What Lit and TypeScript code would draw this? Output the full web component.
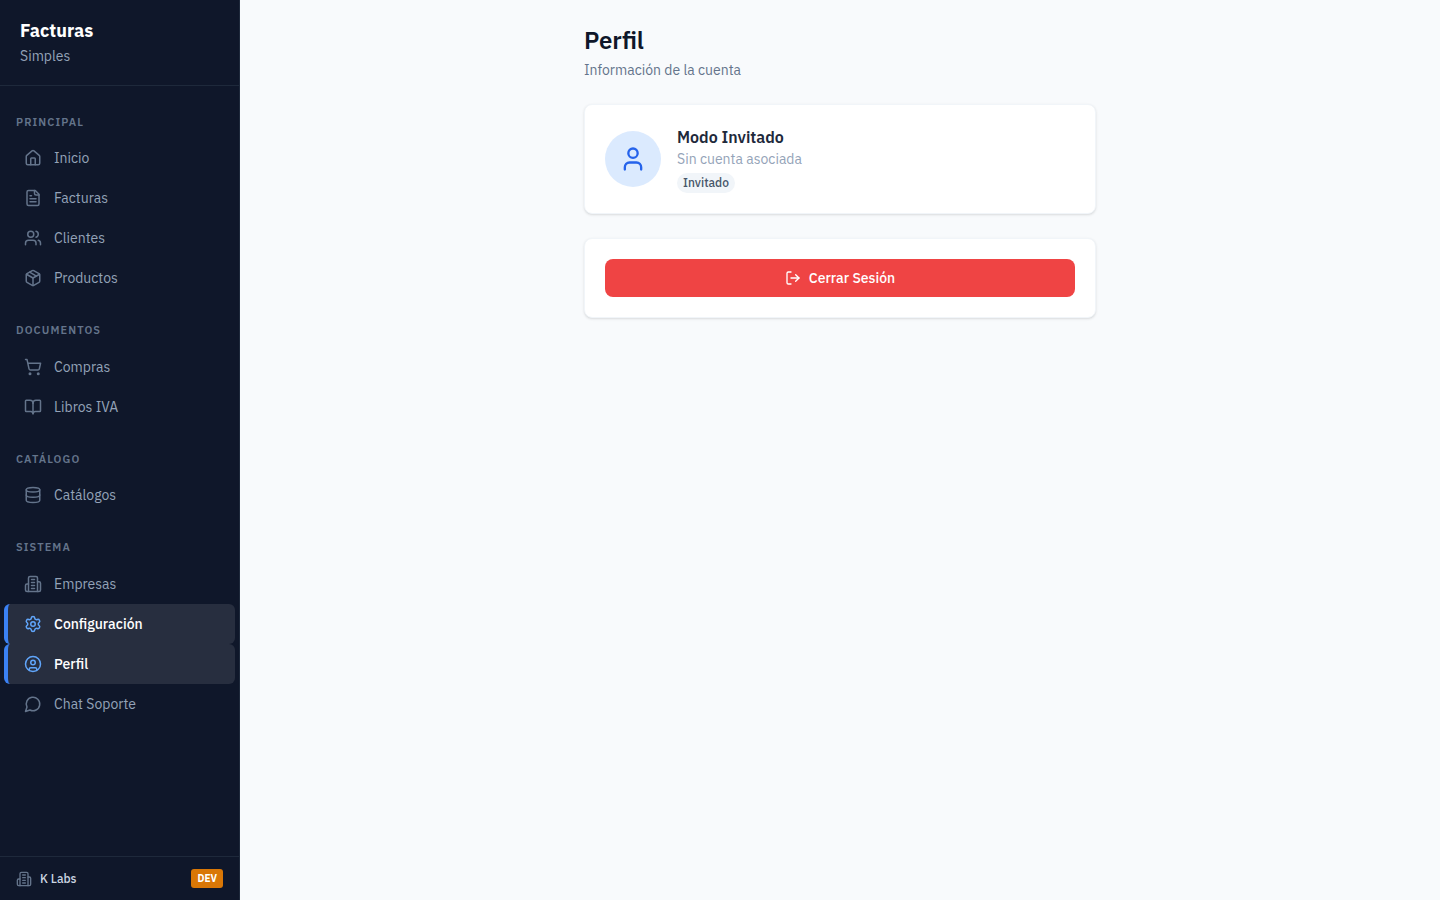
import { LitElement, html, css, svg } from "lit";
import { customElement, property } from "lit/decorators.js";

const icons = {
  home: svg`<path d="M15 21v-8a1 1 0 0 0-1-1h-4a1 1 0 0 0-1 1v8"/><path d="M3 10a2 2 0 0 1 .709-1.528l7-5.999a2 2 0 0 1 2.582 0l7 5.999A2 2 0 0 1 21 10v9a2 2 0 0 1-2 2H5a2 2 0 0 1-2-2z"/>`,
  file: svg`<path d="M15 2H6a2 2 0 0 0-2 2v16a2 2 0 0 0 2 2h12a2 2 0 0 0 2-2V7Z"/><path d="M14 2v4a2 2 0 0 0 2 2h4"/><path d="M10 9H8"/><path d="M16 13H8"/><path d="M16 17H8"/>`,
  users: svg`<path d="M16 21v-2a4 4 0 0 0-4-4H6a4 4 0 0 0-4 4v2"/><circle cx="9" cy="7" r="4"/><path d="M22 21v-2a4 4 0 0 0-3-3.87"/><path d="M16 3.13a4 4 0 0 1 0 7.75"/>`,
  box: svg`<path d="m7.5 4.27 9 5.15"/><path d="M21 8a2 2 0 0 0-1-1.73l-7-4a2 2 0 0 0-2 0l-7 4A2 2 0 0 0 3 8v8a2 2 0 0 0 1 1.73l7 4a2 2 0 0 0 2 0l7-4A2 2 0 0 0 21 16Z"/><path d="m3.3 7 8.7 5 8.7-5"/><path d="M12 22V12"/>`,
  cart: svg`<circle cx="8" cy="21" r="1"/><circle cx="19" cy="21" r="1"/><path d="M2.05 2.05h2l2.66 12.42a2 2 0 0 0 2 1.58h9.78a2 2 0 0 0 1.95-1.57l1.65-7.43H5.12"/>`,
  book: svg`<path d="M12 7v14"/><path d="M3 18a1 1 0 0 1-1-1V4a1 1 0 0 1 1-1h5a4 4 0 0 1 4 4 4 4 0 0 1 4-4h5a1 1 0 0 1 1 1v13a1 1 0 0 1-1 1h-6a3 3 0 0 0-3 3 3 3 0 0 0-3-3z"/>`,
  database: svg`<ellipse cx="12" cy="5" rx="9" ry="3"/><path d="M3 5v14a9 3 0 0 0 18 0V5"/><path d="M3 12a9 3 0 0 0 18 0"/>`,
  building: svg`<path d="M6 22V4a2 2 0 0 1 2-2h8a2 2 0 0 1 2 2v18Z"/><path d="M6 12H4a2 2 0 0 0-2 2v6a2 2 0 0 0 2 2h2"/><path d="M18 9h2a2 2 0 0 1 2 2v9a2 2 0 0 1-2 2h-2"/><path d="M10 6h4"/><path d="M10 10h4"/><path d="M10 14h4"/><path d="M10 18h4"/>`,
  settings: svg`<path d="M9.671 4.136a2.34 2.34 0 0 1 4.659 0 2.34 2.34 0 0 0 3.319 1.915 2.34 2.34 0 0 1 2.33 4.033 2.34 2.34 0 0 0 0 3.831 2.34 2.34 0 0 1-2.33 4.033 2.34 2.34 0 0 0-3.319 1.915 2.34 2.34 0 0 1-4.659 0 2.34 2.34 0 0 0-3.32-1.915 2.34 2.34 0 0 1-2.33-4.033 2.34 2.34 0 0 0 0-3.831A2.34 2.34 0 0 1 6.35 6.051a2.34 2.34 0 0 0 3.319-1.915"/><circle cx="12" cy="12" r="3"/>`,
  profile: svg`<circle cx="12" cy="12" r="10"/><circle cx="12" cy="10" r="3"/><path d="M7 20.662V19a2 2 0 0 1 2-2h6a2 2 0 0 1 2 2v1.662"/>`,
  chat: svg`<path d="M7.9 20A9 9 0 1 0 4 16.1L2 22Z"/>`,
  user: svg`<path d="M19 21v-2a4 4 0 0 0-4-4H9a4 4 0 0 0-4 4v2"/><circle cx="12" cy="7" r="4"/>`,
  logout: svg`<path d="M9 21H5a2 2 0 0 1-2-2V5a2 2 0 0 1 2-2h4"/><path d="m16 17 5-5-5-5"/><path d="M21 12H9"/>`,
};
type IconName = keyof typeof icons;

const sections: { title: string; items: { icon: IconName; label: string; active?: boolean }[] }[] = [
  {
    title: "Principal",
    items: [
      { icon: "home", label: "Inicio" },
      { icon: "file", label: "Facturas" },
      { icon: "users", label: "Clientes" },
      { icon: "box", label: "Productos" },
    ],
  },
  {
    title: "Documentos",
    items: [
      { icon: "cart", label: "Compras" },
      { icon: "book", label: "Libros IVA" },
    ],
  },
  { title: "Catálogo", items: [{ icon: "database", label: "Catálogos" }] },
  {
    title: "Sistema",
    items: [
      { icon: "building", label: "Empresas" },
      { icon: "settings", label: "Configuración", active: true },
      { icon: "profile", label: "Perfil", active: true },
      { icon: "chat", label: "Chat Soporte" },
    ],
  },
];

@customElement("app-icon")
export class AppIcon extends LitElement {
  @property() name: IconName = "home";

  static styles = css`
    :host {
      display: block;
      flex: none;
      width: 18px;
      height: 18px;
    }
    .glyph {
      display: block;
      width: 100%;
      height: 100%;
      fill: none;
      stroke: currentColor;
      stroke-width: 2;
      stroke-linecap: round;
      stroke-linejoin: round;
    }
  `;

  render() {
    return html`<svg class="glyph" viewBox="0 0 24 24" aria-hidden="true">${icons[this.name]}</svg>`;
  }
}

@customElement("app-sidebar")
export class AppSidebar extends LitElement {
  static styles = css`
    :host {
      display: flex;
      flex-direction: column;
      box-sizing: border-box;
      background: #0f172a;
      border-right: 1px solid #1e293b;
      color: #94a3b8;
    }
    .brand {
      padding: 20px;
      border-bottom: 1px solid #1e293b;
    }
    .brand-name {
      margin: 0;
      font-size: 18px;
      line-height: 1.25;
      font-weight: 700;
      color: #ffffff;
    }
    .brand-sub {
      margin: 4px 0 0;
      font-size: 14px;
      line-height: 1.3;
    }
    .nav {
      flex: 1;
      display: flex;
      flex-direction: column;
      gap: 20px;
      padding: 24px 0;
      overflow: auto;
    }
    .title {
      margin: 0;
      padding: 4px 16px 8px;
      font-size: 11px;
      line-height: 1.5;
      font-weight: 600;
      letter-spacing: 0.1em;
      text-transform: uppercase;
      color: #64748b;
    }
    .list {
      margin: 0;
      padding: 0 4px;
      list-style: none;
    }
    .link {
      display: flex;
      align-items: center;
      gap: 12px;
      height: 40px;
      box-sizing: border-box;
      padding: 0 16px;
      border-left: 4px solid transparent;
      border-radius: 6px;
      font-size: 14px;
      color: #94a3b8;
      text-decoration: none;
    }
    .link app-icon {
      color: #64748b;
    }
    .link.active {
      background: #272e3f;
      border-left-color: #3b82f6;
      color: #ffffff;
      font-weight: 500;
    }
    .link.active app-icon {
      color: #60a5fa;
    }
    .foot {
      display: flex;
      align-items: center;
      gap: 8px;
      padding: 12px 16px;
      border-top: 1px solid #1e293b;
    }
    .foot app-icon {
      width: 16px;
      height: 16px;
      color: #64748b;
    }
    .company {
      flex: 1;
      font-size: 12px;
      line-height: 17px;
      font-weight: 500;
      color: #cbd5e1;
    }
    .env {
      padding: 2px 6px;
      border-radius: 3px;
      background: #d97706;
      color: #ffffff;
      font-size: 10px;
      line-height: 15px;
      font-weight: 700;
    }
  `;

  render() {
    return html`
      <header class="brand">
        <p class="brand-name">Facturas</p>
        <p class="brand-sub">Simples</p>
      </header>
      <nav class="nav">
        ${sections.map(
          (s) => html`<section>
            <h2 class="title">${s.title}</h2>
            <ul class="list">
              ${s.items.map(
                (i) => html`<li>
                  <a class="link ${i.active ? "active" : ""}" href="#"
                    ><app-icon name=${i.icon}></app-icon><span>${i.label}</span></a
                  >
                </li>`
              )}
            </ul>
          </section>`
        )}
      </nav>
      <footer class="foot">
        <app-icon name="building"></app-icon>
        <span class="company">K Labs</span>
        <span class="env">DEV</span>
      </footer>
    `;
  }
}

@customElement("app-root")
export class AppRoot extends LitElement {
  static styles = css`
    :host {
      display: grid;
      grid-template-columns: 240px 1fr;
      min-height: 100vh;
      background: #f8fafc;
      color: #0f172a;
      font-family: "IBM Plex Sans", Roboto, "Noto Sans", sans-serif;
      font-size: 14px;
    }
    .main {
      padding: 24px;
    }
    .page {
      max-width: 512px;
      margin: 0 auto;
      display: flex;
      flex-direction: column;
      gap: 24px;
    }
    .heading {
      margin: 0;
      font-size: 24px;
      line-height: 32px;
      font-weight: 600;
    }
    .lead {
      margin: 4px 0 0;
      line-height: 20px;
      color: #64748b;
    }
    .card {
      padding: 20px;
      border: 1px solid #f1f5f9;
      border-radius: 8px;
      background: #ffffff;
      box-shadow: 0 1px 3px rgba(0, 0, 0, 0.1), 0 1px 2px -1px rgba(0, 0, 0, 0.1);
    }
    .account {
      display: flex;
      align-items: center;
      gap: 16px;
    }
    .avatar {
      display: grid;
      place-items: center;
      width: 56px;
      height: 56px;
      border-radius: 50%;
      background: #dbeafe;
      color: #2563eb;
    }
    .avatar app-icon {
      width: 28px;
      height: 28px;
    }
    .name {
      margin: 0;
      font-size: 16px;
      line-height: 24px;
      font-weight: 600;
      color: #1e293b;
    }
    .note {
      margin: 0 0 4px;
      line-height: 20px;
      color: #94a3b8;
    }
    .badge {
      display: block;
      width: fit-content;
      padding: 2px 6px;
      border-radius: 10px;
      background: #f1f5f9;
      color: #475569;
      font-size: 12px;
      line-height: 16px;
      font-weight: 500;
    }
    .logout {
      display: flex;
      align-items: center;
      justify-content: center;
      gap: 8px;
      width: 100%;
      padding: 9px 16px;
      border: 0;
      border-radius: 8px;
      background: #ef4444;
      color: #ffffff;
      font: inherit;
      font-weight: 500;
      line-height: 20px;
    }
    .logout app-icon {
      width: 16px;
      height: 16px;
    }
  `;

  render() {
    return html`
      <app-sidebar></app-sidebar>
      <main class="main">
        <div class="page">
          <header>
            <h1 class="heading">Perfil</h1>
            <p class="lead">Información de la cuenta</p>
          </header>
          <section class="card account">
            <div class="avatar"><app-icon name="user"></app-icon></div>
            <div>
              <h2 class="name">Modo Invitado</h2>
              <p class="note">Sin cuenta asociada</p>
              <span class="badge">Invitado</span>
            </div>
          </section>
          <section class="card">
            <button class="logout" type="button">
              <app-icon name="logout"></app-icon>Cerrar Sesión
            </button>
          </section>
        </div>
      </main>
    `;
  }
}
